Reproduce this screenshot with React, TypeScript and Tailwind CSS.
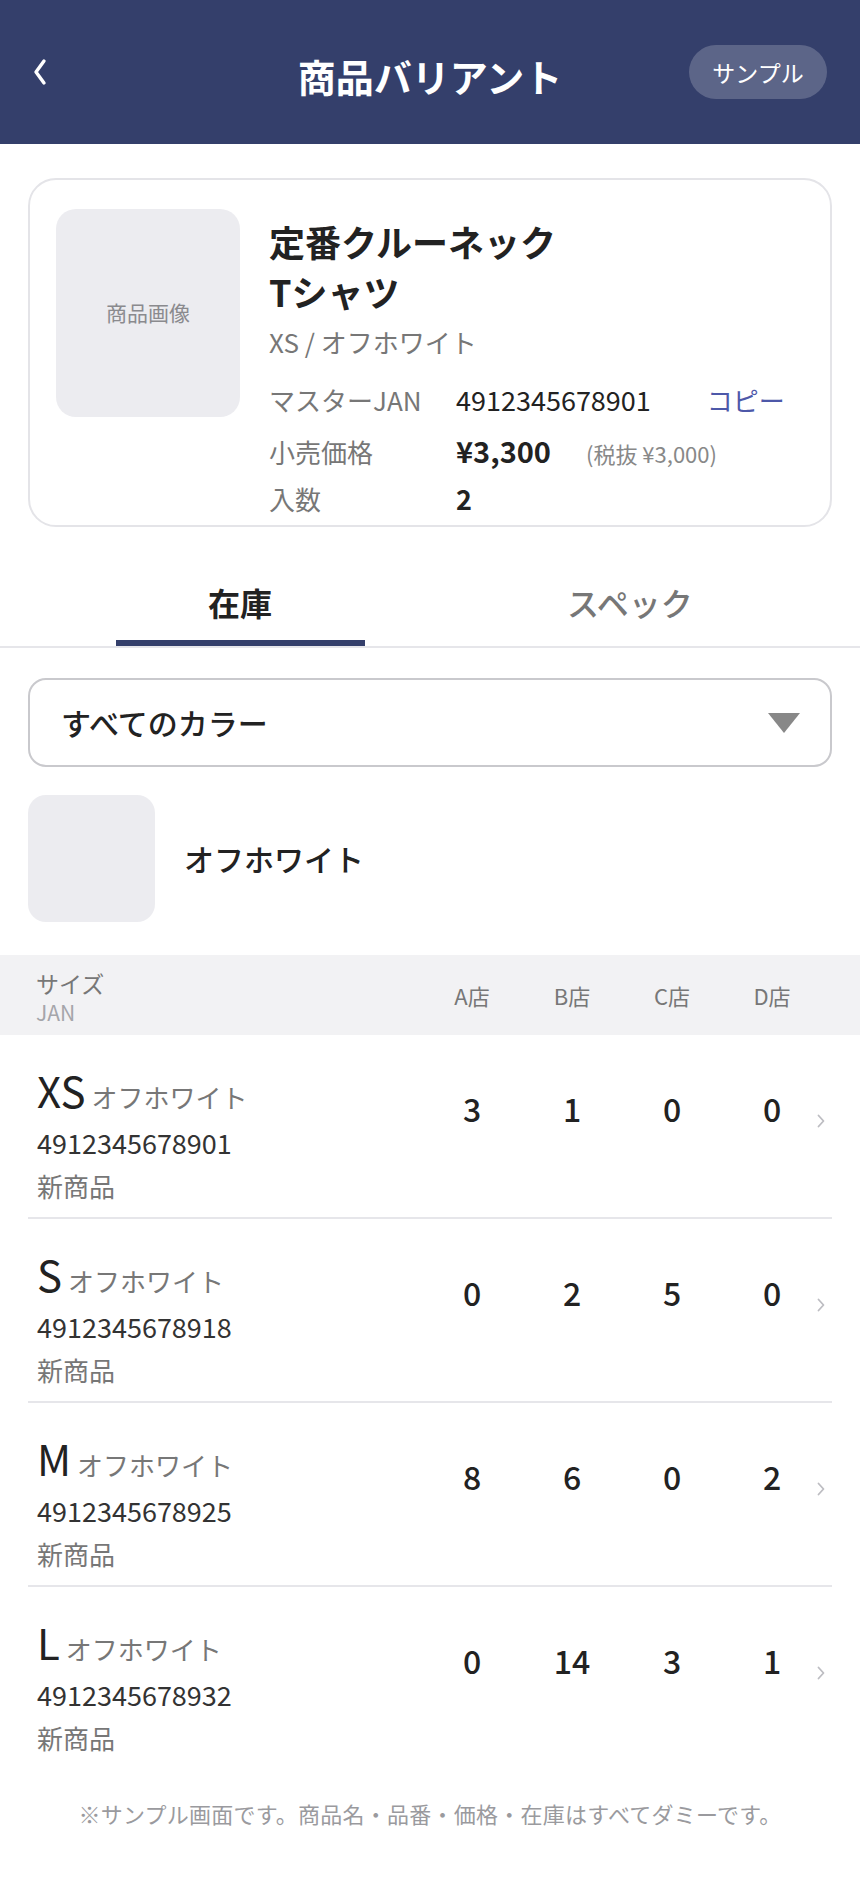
import React from "react";

const variants = [
  { size: "XS", jan: "4912345678901", stock: [3, 1, 0, 0] },
  { size: "S", jan: "4912345678918", stock: [0, 2, 5, 0] },
  { size: "M", jan: "4912345678925", stock: [8, 6, 0, 2] },
  { size: "L", jan: "4912345678932", stock: [0, 14, 3, 1] },
];

const stores = ["A店", "B店", "C店", "D店"];

function BackIcon() {
  return (
    <svg width="14" height="28" viewBox="0 0 14 28" fill="none">
      <path
        d="M11 3 L3 14 L11 25"
        stroke="white"
        strokeWidth="3.4"
        strokeLinecap="round"
        strokeLinejoin="round"
      />
    </svg>
  );
}

function RowChevron() {
  return (
    <svg width="8" height="14" viewBox="0 0 8 14" fill="none">
      <path
        d="M1.5 1.5 L6.5 7 L1.5 12.5"
        stroke="#bdbdc2"
        strokeWidth="1.8"
        strokeLinecap="round"
        strokeLinejoin="round"
      />
    </svg>
  );
}

function InfoRow({
  label,
  className = "",
  children,
}: {
  label: string;
  className?: string;
  children: React.ReactNode;
}) {
  return (
    <div className={`flex items-baseline leading-[36px] ${className}`}>
      <div className="w-[187px] text-[26px] text-[#777]">{label}</div>
      {children}
    </div>
  );
}

export default function App() {
  return (
    <div
      className="min-h-[1892px] bg-white text-[#222]"
      style={{ fontFamily: '"Noto Sans CJK JP", "Noto Sans", sans-serif' }}
    >
      {/* header */}
      <header className="h-[144px] bg-[#343f6b] grid grid-cols-[1fr_auto_1fr] items-center px-[33px]">
        <div className="flex items-center">
          <BackIcon />
        </div>
        <h1 className="mt-[8px] text-[38px] font-bold text-white leading-none">商品バリアント</h1>
        <div className="flex justify-end">
          <button className="w-[138px] h-[54px] rounded-full bg-white/20 text-white text-[23px] leading-none flex items-center justify-center">
            サンプル
          </button>
        </div>
      </header>

      {/* product card */}
      <div className="mx-[28px] mt-[34px] border-2 border-[#e4e4e8] rounded-[28px] pt-[29px] pl-[26px] pr-[26px] pb-[8px] flex">
        <div className="w-[184px] h-[208px] shrink-0 rounded-[20px] bg-[#ececf0] flex items-center justify-center text-[21px] text-[#8a8a8e]">
          商品画像
        </div>
        <div className="ml-[29px] flex-1">
          <div className="mt-[7px] text-[36px] font-bold leading-[50px] text-[#222]">
            定番クルーネック
            <br />
            Tシャツ
          </div>
          <div className="mt-[8px] text-[26px] leading-[36px] text-[#777]">XS / オフホワイト</div>
          <div className="mt-[22px] flex flex-col">
            <InfoRow label="マスターJAN">
              <span className="text-[27px] text-[#222]">4912345678901</span>
              <span className="ml-[56px] text-[26px] text-[#4d58a9]">コピー</span>
            </InfoRow>
            <InfoRow label="小売価格" className="mt-[14px]">
              <span className="text-[29px] font-bold text-[#222]">¥3,300</span>
              <span className="ml-[35px] text-[22px] text-[#888]">(税抜 ¥3,000)</span>
            </InfoRow>
            <InfoRow label="入数" className="mt-[10px]">
              <span className="text-[27px] font-bold text-[#222]">2</span>
            </InfoRow>
          </div>
        </div>
      </div>

      {/* tabs */}
      <div className="mt-[53px] border-b-2 border-[#e6e6ea] flex">
        <div className="w-[480px] flex flex-col items-center">
          <span className="text-[32px] font-bold leading-[44px] text-[#222]">在庫</span>
          <div className="mt-[16px] w-[249px] h-[6px] bg-[#343f6b]" />
        </div>
        <div className="w-[300px] flex flex-col items-center">
          <span className="text-[32px] font-medium leading-[44px] text-[#777]">スペック</span>
          <div className="mt-[16px] h-[6px]" />
        </div>
      </div>

      {/* color select */}
      <div className="mx-[28px] mt-[30px] h-[89px] border-2 border-[#c9c9cd] rounded-[18px] flex items-center justify-between pl-[31px] pr-[30px]">
        <span className="text-[30px] font-medium text-[#222]">すべてのカラー</span>
        <svg width="32" height="20" viewBox="0 0 32 20">
          <path d="M0 0 H32 L16 20 Z" fill="#888" />
        </svg>
      </div>

      {/* color swatch */}
      <div className="mx-[28px] mt-[28px] flex items-center">
        <div className="w-[127px] h-[127px] rounded-[18px] bg-[#ececf0]" />
        <span className="ml-[29px] text-[30px] font-medium text-[#222]">オフホワイト</span>
      </div>

      {/* table header */}
      <div className="mt-[33px] h-[80px] bg-[#f2f2f4] pl-[36px] pr-[28px] grid grid-cols-[1fr_100px_100px_100px_100px_10px] items-center">
        <div className="self-start pt-[14px] flex flex-col">
          <span className="text-[23px] leading-[28px] text-[#777]">サイズ</span>
          <span className="mt-[3px] text-[21px] leading-[24px] text-[#a5a5aa]">JAN</span>
        </div>
        {stores.map((s) => (
          <div key={s} className="text-center text-[22px] text-[#777]">
            {s}
          </div>
        ))}
        <div />
      </div>

      {/* rows */}
      <div className="mx-[28px]">
        {variants.map((v, i) => (
          <div
            key={v.size}
            className={`h-[184px] pl-[9px] grid grid-cols-[1fr_100px_100px_100px_100px_10px] items-start ${
              i < variants.length - 1 ? "border-b-2 border-[#e6e6ea]" : ""
            }`}
          >
            <div className="pt-[25px] flex flex-col">
              <div className="text-[42px] leading-[60px] text-[#222]">
                {v.size}
                <span className="ml-[6px] text-[26px] leading-none text-[#777]">オフホワイト</span>
              </div>
              <div className="text-[27px] leading-[45px] text-[#333]">{v.jan}</div>
              <div className="text-[26px] leading-[41px] text-[#777]">新商品</div>
            </div>
            {v.stock.map((n, j) => (
              <div key={j} className="pt-[53px] text-center text-[32px] font-medium leading-[40px] text-[#222]">
                {n}
              </div>
            ))}
            <div className="pt-[79px] -ml-[5px]">
              <RowChevron />
            </div>
          </div>
        ))}
      </div>

      {/* footer note */}
      <p className="pt-[27px] text-center text-[22px] tracking-[0.25px] leading-[30px] text-[#9a9a9e]">
        ※サンプル画面です。商品名・品番・価格・在庫はすべてダミーです。
      </p>
    </div>
  );
}
